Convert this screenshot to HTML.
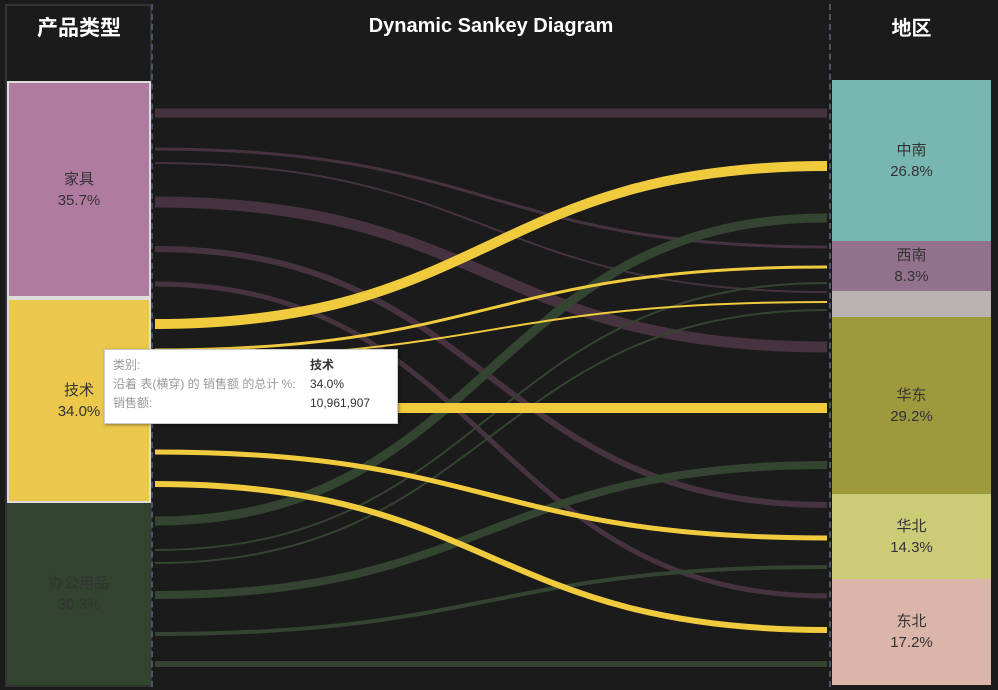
<!DOCTYPE html>
<html><head><meta charset="utf-8"><style>
body{margin:0;width:998px;height:690px;background:#1b1b1b;position:relative;overflow:hidden;font-family:"Liberation Sans","Noto Sans CJK SC",sans-serif}
.a{position:absolute}
.seg{position:absolute;display:flex;flex-direction:column;align-items:center;justify-content:center;text-align:center;font-size:15px;line-height:21px;color:#333;box-sizing:border-box}
</style></head><body>
<div class="a" style="left:5px;top:4px;width:147px;height:683px;border:2px solid #333;box-sizing:border-box"></div>
<div class="a" style="left:0;top:12px;width:158px;text-align:center;color:#fff;font-weight:bold;font-size:21px">产品类型</div>
<div class="a" style="left:0;top:15px;width:982px;text-align:center;color:#fff;font-weight:bold;font-size:20px">Dynamic Sankey Diagram</div>
<div class="a" style="left:832px;top:12px;width:159px;text-align:center;color:#fff;font-weight:bold;font-size:20px">地区</div>
<div class="a" style="left:151px;top:4px;height:683px;border-left:2px dashed #4a5568"></div>
<div class="a" style="left:829px;top:4px;height:683px;border-left:2px dashed #4a5568"></div>
<div class="seg" style="left:7px;top:81px;width:144px;height:217px;background:#b07ba0;border:2px solid #ddd"><div>家具</div><div>35.7%</div></div>
<div class="seg" style="left:7px;top:298px;width:144px;height:205px;background:#ebc84b;border:2px solid #ddd"><div>技术</div><div>34.0%</div></div>
<div class="seg" style="left:7px;top:503px;width:144px;height:182px;background:#324430"><div>办公用品</div><div>30.3%</div></div>
<div class="seg" style="left:832px;top:80px;width:159px;height:161px;background:#78b7b1"><div>中南</div><div>26.8%</div></div>
<div class="seg" style="left:832px;top:241px;width:159px;height:50px;background:#93728d"><div>西南</div><div>8.3%</div></div>
<div class="seg" style="left:832px;top:291px;width:159px;height:26px;background:#bab3b1"></div>
<div class="seg" style="left:832px;top:317px;width:159px;height:177px;background:#9d993c"><div>华东</div><div>29.2%</div></div>
<div class="seg" style="left:832px;top:494px;width:159px;height:85px;background:#cccb76"><div>华北</div><div>14.3%</div></div>
<div class="seg" style="left:832px;top:579px;width:159px;height:106px;background:#dcb5aa"><div>东北</div><div>17.2%</div></div>
<svg class="a" style="left:0;top:0" width="998" height="690" fill="none">
<g stroke="#46333f">
<path d="M155 113 L827 113" stroke-width="9"/>
<path d="M155 149 C490 149 490 247 827 247" stroke-width="3"/>
<path d="M155 163 C490 163 490 292 827 292" stroke-width="2"/>
<path d="M155 202 C490 202 490 347 827 347" stroke-width="11"/>
<path d="M155 249 C490 249 490 505 827 505" stroke-width="6"/>
<path d="M155 284 C490 284 490 596 827 596" stroke-width="5"/>
</g>
<g stroke="#334430">
<path d="M155 521 C490 521 490 218 827 218" stroke-width="9"/>
<path d="M155 550 C490 550 490 283 827 283" stroke-width="2"/>
<path d="M155 563 C490 563 490 310 827 310" stroke-width="2"/>
<path d="M155 595 C490 595 490 465 827 465" stroke-width="8"/>
<path d="M155 634 C490 634 490 567 827 567" stroke-width="4"/>
<path d="M155 664 L827 664" stroke-width="6"/>
</g>
<g stroke="#f0cb3e">
<path d="M155 324 C490 324 490 166 827 166" stroke-width="10"/>
<path d="M155 350 C490 350 490 267 827 267" stroke-width="3"/>
<path d="M155 358 C490 358 490 302 827 302" stroke-width="2"/>
<path d="M155 408 L827 408" stroke-width="10"/>
<path d="M155 452 C490 452 490 538 827 538" stroke-width="5"/>
<path d="M155 484 C490 484 490 630 827 630" stroke-width="6"/>
</g>
</svg>
<div class="a" style="left:104px;top:349px;width:294px;height:75px;background:#fff;border:1px solid #ccc;box-sizing:border-box;font-size:12px;line-height:19px;box-shadow:1px 1px 3px rgba(0,0,0,.4)">
<div class="a" style="left:8px;top:6px;color:#999;white-space:nowrap">类别:<br>沿着 表(横穿) 的 销售额 的总计 %:<br>销售额:</div>
<div class="a" style="left:205px;top:6px;color:#333;white-space:nowrap"><b>技术</b><br>34.0%<br>10,961,907</div>
</div>
</body></html>
